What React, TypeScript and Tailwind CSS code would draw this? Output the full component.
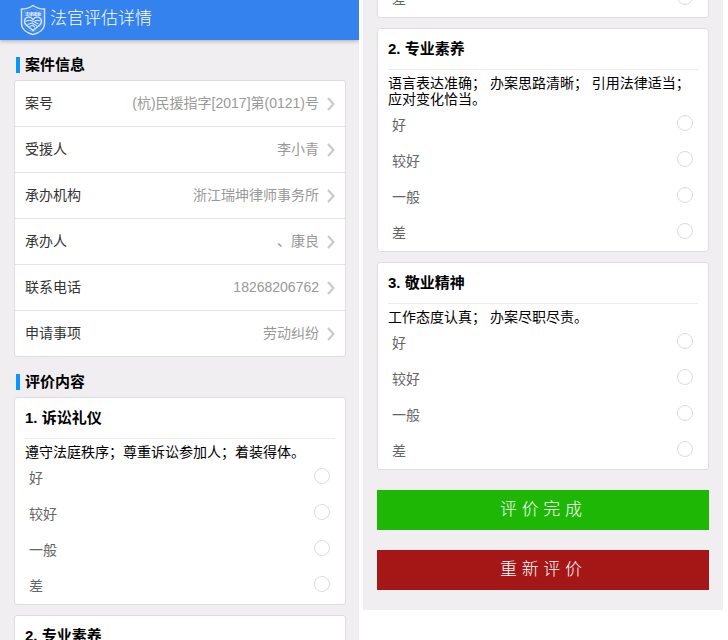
import type { ReactNode } from 'react';

interface CaseField {
  label: string;
  value: string;
}

interface Question {
  id: number;
  title: string;
  description: string;
}

const CASE_FIELDS: CaseField[] = [
  { label: '案号', value: '(杭)民援指字[2017]第(0121)号' },
  { label: '受援人', value: '李小青' },
  { label: '承办机构', value: '浙江瑞坤律师事务所' },
  { label: '承办人', value: '、康良' },
  { label: '联系电话', value: '18268206762' },
  { label: '申请事项', value: '劳动纠纷' },
];

const QUESTIONS: Question[] = [
  { id: 1, title: '诉讼礼仪', description: '遵守法庭秩序；尊重诉讼参加人；着装得体。' },
  { id: 2, title: '专业素养', description: '语言表达准确； 办案思路清晰； 引用法律适当； 应对变化恰当。' },
  { id: 3, title: '敬业精神', description: '工作态度认真； 办案尽职尽责。' },
];

const OPTIONS = ['好', '较好', '一般', '差'];

function Logo() {
  return (
    <svg width="26" height="32" viewBox="0 0 26 32" fill="none" stroke="#cfe2fd" aria-hidden="true">
      <path d="M13 1.500C10 3.800 6 5 1.500 5v14.500c0 5.500 5 9.500 11.500 11 6.500-1.500 11.500-5.500 11.500-11V5C20 5 16 3.800 13 1.500Z" strokeWidth="1.500" />
      <path d="M13 4.500C10.500 6.200 7.500 7 4 7.200v12c0 4.200 3.800 7.200 9 8.600 5.200-1.400 9-4.400 9-8.600v-12c-3.500-.2-6.500-1-9-2.700Z" strokeWidth="0.5" opacity="0.5" />
      <text x="13" y="11.500" textAnchor="middle" fontSize="4" fontWeight="700" fill="#f2f7ff" stroke="none">
        法律援助
      </text>
      <path d="M13 15.500c-1.800-2.500-4.500-3-6.500-1.800-2.200 1.300-2.500 4.300-1 6.300 1.800 2.400 5 4.400 7.500 6.600 2.500-2.200 5.700-4.200 7.500-6.600 1.500-2 1.200-5-1-6.300-2-1.200-4.700-.7-6.500 1.800Z" strokeWidth="1.500" />
      <path d="M5.500 17.500c2.500-1.200 4.500-1.500 7-.5l6 3M7.500 20.500l4.500-1.500 5 3M20.500 17c-2-.8-4-1-6 .2M9.500 22.500l3-1.200 2.500 2" strokeWidth="1.300" />
    </svg>
  );
}

function Chevron() {
  return (
    <svg width="8" height="14" viewBox="0 0 8 14" fill="none" stroke="#c7c7cc" strokeWidth="2" aria-hidden="true">
      <path d="M1 1l5.500 6L1 13" />
    </svg>
  );
}

function Card({ children }: { children: ReactNode }) {
  return <div className="shrink-0 rounded-[3px] border border-[#dddddf] bg-white">{children}</div>;
}

function SectionTitle({ children }: { children: ReactNode }) {
  return (
    <h2 className="flex items-center gap-[5px] pt-[17px] pb-[7px] pl-0.5 text-[15px] leading-4 font-bold text-black">
      <span className="h-4 w-1 bg-[#0a95ff]" />
      {children}
    </h2>
  );
}

function OptionRow({ name, label }: { name: string; label: string }) {
  return (
    <label className="flex h-9 items-start justify-between pt-2 pr-[15px] pl-3.5 text-sm leading-5 text-[#666]">
      {label}
      <input
        type="radio"
        name={name}
        value={label}
        className="size-4 appearance-none rounded-full border border-[#dcdcdc] bg-white checked:border-[5px] checked:border-[#3482ee]"
      />
    </label>
  );
}

function QuestionCard({ question, group }: { question: Question; group: string }) {
  const name = `${group}-${question.id}`;

  return (
    <Card>
      <fieldset>
        <div className="px-2.5">
          <h3 className="border-b border-[#ececec] text-[15px] leading-10 font-bold text-black">
            {question.id}. {question.title}
          </h3>
          <p className="pt-[5px] text-sm leading-4 text-black">{question.description}</p>
        </div>
        {OPTIONS.map((option) => (
          <OptionRow key={option} name={name} label={option} />
        ))}
      </fieldset>
    </Card>
  );
}

export default function App() {
  return (
    <div className="grid h-screen grid-cols-[359fr_360fr] items-start gap-1 overflow-hidden bg-white pr-[5px] font-['Liberation_Sans','Noto_Sans_CJK_SC',sans-serif]">
      <main className="h-screen overflow-hidden bg-[#f0eef1]">
        <header className="relative flex h-10 items-center gap-1 bg-[#3482ee] pl-5 shadow-[0_1px_4px_rgba(0,0,0,0.3)]">
          <Logo />
          <h1 className="pb-0.5 text-[17px] leading-6 font-light text-white">法官评估详情</h1>
        </header>

        <div className="pr-[13px] pl-3.5">
          <SectionTitle>案件信息</SectionTitle>
          <Card>
            <div className="divide-y divide-[#e4e4e6]">
              {CASE_FIELDS.map((field) => (
                <a key={field.label} href="#" className="flex items-center px-2.5 text-sm leading-[45px] text-[#333]">
                  {field.label}
                  <span className="mr-2 ml-auto text-[#999]">{field.value}</span>
                  <Chevron />
                </a>
              ))}
            </div>
          </Card>

          <SectionTitle>评价内容</SectionTitle>
          <div className="flex flex-col gap-2.5">
            {QUESTIONS.slice(0, 2).map((question) => (
              <QuestionCard key={question.id} question={question} group="left" />
            ))}
          </div>
        </div>
      </main>

      <section className="flex flex-col gap-2.5 bg-[#f0eef1] px-3.5 pb-5">
        {/* Tail of the scrolled-off first card */}
        <div className="flex h-[18px] flex-col justify-end overflow-hidden">
          <Card>
            <OptionRow name="right-1" label="差" />
          </Card>
        </div>
        {QUESTIONS.slice(1).map((question) => (
          <QuestionCard key={question.id} question={question} group="right" />
        ))}
        <div className="flex flex-col gap-5 pt-2.5 text-[17px] font-light text-white">
          <button type="button" className="h-10 bg-[#1eb706] pr-1">
            评 价 完 成
          </button>
          <button type="button" className="h-10 bg-[#a51717] pr-1">
            重 新 评 价
          </button>
        </div>
      </section>
    </div>
  );
}
